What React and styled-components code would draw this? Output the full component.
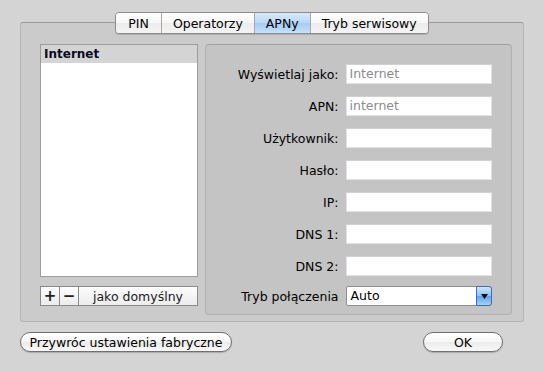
import styled, { createGlobalStyle } from 'styled-components';

const GlobalStyle = createGlobalStyle`
  html, body {
    margin: 0;
    padding: 0;
    background: #d4d4d4;
  }
  body {
    font-family: "DejaVu Sans", "Liberation Sans", sans-serif;
    font-size: 12px;
    color: #000;
  }
`;

const Window = styled.div`
  width: 544px;
  height: 372px;
  box-sizing: border-box;
  padding: 22px 20px 0 20px;
  background: #d4d4d4;
`;

const TabPanel = styled.div`
  height: 300px;
  box-sizing: border-box;
  border: 1px solid #b4b4b4;
  border-top-color: #9a9a9a;
  border-radius: 3px;
  background: #cbcbcb;
  padding: 0 10px 8px 19px;
`;

const TabBar = styled.div`
  display: flex;
  justify-content: center;
  margin: -11px -10px 0 -19px;
`;

const Tabs = styled.div`
  display: flex;
  height: 20px;
  border: 1px solid #8c8c8c;
  border-radius: 4px;
  overflow: hidden;
  box-shadow: 0 1px 1px rgba(0, 0, 0, 0.15);
`;

const Tab = styled.div`
  padding: 0 ${p => p.$pad}px;
  display: flex;
  align-items: center;
  font-size: 12.5px;
  border-left: ${p => (p.$first ? 'none' : '1px solid #a8a8a8')};
  background: ${p =>
    p.$active
      ? 'linear-gradient(#d9e9fc 0%, #b9d7f8 50%, #a4cbf4 51%, #c5e0fb 100%)'
      : 'linear-gradient(#ffffff 0%, #f6f6f6 50%, #ececec 51%, #f4f4f4 100%)'};
`;

const Content = styled.div`
  display: flex;
  gap: 7px;
  margin-top: 10px;
`;

const LeftColumn = styled.div`
  width: 158px;
  display: flex;
  flex-direction: column;
  gap: 9px;
`;

const List = styled.div`
  height: 233px;
  box-sizing: border-box;
  border: 1px solid #9c9c9c;
  background: #fff;
`;

const ListItem = styled.div`
  height: 18px;
  line-height: 18px;
  padding-left: 3px;
  font-weight: bold;
  background: ${p => (p.$selected ? '#d4d4d4' : 'transparent')};
  color: #0a0a1e;
`;

const ButtonStrip = styled.div`
  display: flex;
  height: 18px;
  border: 1px solid #8a8a8a;
  background: linear-gradient(#fdfdfd, #ececec);
`;

const StripButton = styled.div`
  width: ${p => (p.$grow ? 'auto' : '18px')};
  flex: ${p => (p.$grow ? '1' : 'none')};
  display: flex;
  align-items: center;
  justify-content: center;
  border-left: ${p => (p.$first ? 'none' : '1px solid #8a8a8a')};
  font-size: ${p => (p.$grow ? '12.5px' : '15px')};
  font-weight: ${p => (p.$grow ? 'normal' : 'bold')};
  color: #222;
`;

const GroupBox = styled.div`
  width: 307px;
  height: 271px;
  box-sizing: border-box;
  border: 1px solid #b0b0b0;
  border-top-color: #a0a0a0;
  border-radius: 4px;
  background: #c4c4c4;
  padding: 19px 19px 0 0;
  display: flex;
  flex-direction: column;
  gap: 12px;
`;

const Row = styled.div`
  display: flex;
  align-items: center;
  gap: 7px;
  height: 20px;
  margin-top: ${p => (p.$tight ? '-2px' : '0')};
`;

const Label = styled.div`
  width: 133px;
  text-align: right;
  font-size: 12.5px;
  white-space: nowrap;
`;

const Field = styled.div`
  width: 147px;
  height: 20px;
  box-sizing: border-box;
  background: #fff;
  border: 1px solid #e2e2e2;
  border-top-color: #d0d0d0;
  padding-left: 3px;
  line-height: 18px;
  font-size: 12.5px;
  color: #8c8c8c;
`;

const Select = styled.div`
  width: 147px;
  height: 20px;
  box-sizing: border-box;
  display: flex;
  background: #fff;
  border: 1px solid #8e8e8e;
  border-radius: 2px 3px 3px 2px;
  font-size: 12.5px;
`;

const SelectValue = styled.div`
  flex: 1;
  padding-left: 4px;
  line-height: 18px;
`;

const SelectArrow = styled.div`
  width: 14px;
  margin: -1px -1px -1px 0;
  border: 1px solid #3f6fb2;
  border-radius: 0 3px 3px 0;
  background: linear-gradient(#cfe5fc 0%, #8ec0f4 50%, #5fa3ec 51%, #a6d2fb 100%);
  display: flex;
  align-items: center;
  justify-content: center;
`;

const Footer = styled.div`
  display: flex;
  justify-content: space-between;
  padding: 10px 21px 0 0;
`;

const PillButton = styled.div`
  width: ${p => p.$w}px;
  height: 20px;
  box-sizing: border-box;
  border: 1px solid #707070;
  border-radius: 10px;
  background: linear-gradient(#ffffff 0%, #f7f7f7 50%, #ebebeb 51%, #f8f8f8 100%);
  box-shadow: 0 1px 1px rgba(0, 0, 0, 0.2);
  display: flex;
  align-items: center;
  justify-content: center;
  font-size: 12.5px;
`;

const fields = [
  ['Wyświetlaj jako:', 'Internet'],
  ['APN:', 'internet'],
  ['Użytkownik:', ''],
  ['Hasło:', ''],
  ['IP:', ''],
  ['DNS 1:', ''],
  ['DNS 2:', ''],
];

export default function App() {
  return (
    <Window>
      <GlobalStyle />
      <TabPanel>
        <TabBar>
          <Tabs>
            <Tab $first $pad={12}>PIN</Tab>
            <Tab $pad={11}>Operatorzy</Tab>
            <Tab $active $pad={11}>APNy</Tab>
            <Tab $pad={11}>Tryb serwisowy</Tab>
          </Tabs>
        </TabBar>
        <Content>
          <LeftColumn>
            <List>
              <ListItem $selected>Internet</ListItem>
            </List>
            <ButtonStrip>
              <StripButton $first>+</StripButton>
              <StripButton>−</StripButton>
              <StripButton $grow>jako domyślny</StripButton>
            </ButtonStrip>
          </LeftColumn>
          <GroupBox>
            {fields.map(([label, value]) => (
              <Row key={label}>
                <Label>{label}</Label>
                <Field>{value}</Field>
              </Row>
            ))}
            <Row $tight>
              <Label>Tryb połączenia</Label>
              <Select>
                <SelectValue>Auto</SelectValue>
                <SelectArrow>
                  <svg width="7" height="5" viewBox="0 0 7 5">
                    <path d="M0 0 L7 0 L3.5 5 Z" fill="#111" />
                  </svg>
                </SelectArrow>
              </Select>
            </Row>
          </GroupBox>
        </Content>
      </TabPanel>
      <Footer>
        <PillButton $w={212}>Przywróc ustawienia fabryczne</PillButton>
        <PillButton $w={80}>OK</PillButton>
      </Footer>
    </Window>
  );
}
